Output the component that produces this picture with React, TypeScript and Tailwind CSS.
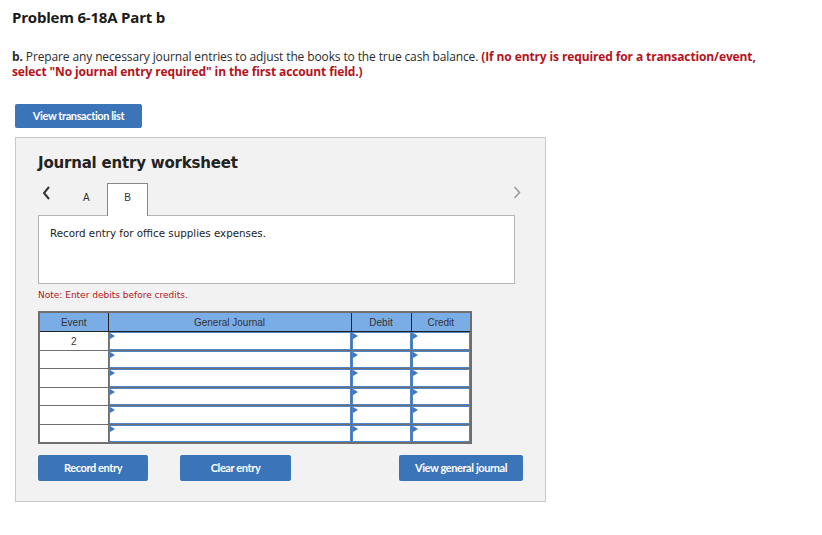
import React from "react";

const Arrow = () => (
  <svg width="5" height="6" viewBox="0 0 5 6" className="absolute left-0 top-0">
    <polygon points="0,0 5,3 0,6" fill="#3c78c6" />
  </svg>
);

function InputCell({ w }: { w: string }) {
  return (
    <td className={`border border-[#6f6f6f] p-0 ${w}`}>
      <div className="relative h-[17.5px] border border-[#4f84c6] bg-white">
        <Arrow />
      </div>
    </td>
  );
}

export default function App() {
  const rows = [0, 1, 2, 3, 4, 5];
  return (
    <div className="w-[822px] h-[535px] bg-white [font-family:'Open_Sans',sans-serif] text-[#222]">
      <div className="pl-[12px] pt-[6px]">
        <h1 className="text-[15px] font-bold text-[#1a1a1a] tracking-[-0.2px]">Problem 6-18A Part b</h1>
        <p className="mt-[20px] text-[12px] leading-[15px] tracking-[-0.12px] text-[#2a2a2a] w-[800px]">
          <b>b.</b> Prepare any necessary journal entries to adjust the books to the true cash balance.{" "}
          <span className="font-bold text-[#b5121b]">
            (If no entry is required for a transaction/event,
            <br />
            select "No journal entry required" in the first account field.)
          </span>
        </p>
      </div>
      <div className="pl-[15px] mt-[23px]">
        <button className="h-[24px] w-[127px] rounded-[2px] bg-[#3b74b8] text-white text-[11px] font-bold tracking-[-0.4px] [font-family:'Lato',sans-serif]">
          View transaction list
        </button>
        <div className="mt-[9px] w-[531px] h-[365px] border border-[#c8c8c8] bg-[#f2f2f2] [font-family:'DejaVu_Sans',Verdana,sans-serif]">
          <div className="pl-[22px] pt-[15px]">
            <h2 className="text-[15px] font-bold tracking-[-0.2px] text-[#222] leading-[20px]">
              Journal entry worksheet
            </h2>
            <div className="mt-[10px] h-[32px] w-[477px] relative">
              <span className="absolute left-[4px] top-[3px]">
                <svg width="9" height="14" viewBox="0 0 9 14"><polyline points="7,1 2,7 7,13" fill="none" stroke="#333" strokeWidth="2" /></svg>
              </span>
              <span className="absolute left-[45px] top-[7px] text-[10px] text-[#333] [font-family:'Liberation_Sans',sans-serif]">A</span>
              <div className="absolute left-[69px] top-0 w-[41px] h-[33px] border border-b-0 border-[#888] bg-white flex justify-center pt-[6px] text-[10px] text-[#333] [font-family:'Liberation_Sans',sans-serif] z-10">
                B
              </div>
              <span className="absolute left-[475px] top-[3px]">
                <svg width="8" height="13" viewBox="0 0 8 13"><polyline points="1.5,1 6.5,6.5 1.5,12" fill="none" stroke="#999" strokeWidth="1.5" /></svg>
              </span>
            </div>
            <div className="w-[477px] h-[69px] border border-[#b5b5b5] bg-white px-[11px] pt-[11px] text-[10.3px] leading-[12px] text-[#222]">
              Record entry for office supplies expenses.
            </div>
            <p className="mt-[6px] text-[9px] leading-[11px] text-[#b5121b]">Note: Enter debits before credits.</p>
            <table className="mt-[10px] border-collapse border-2 border-[#6f6f6f] [font-family:'Liberation_Sans',sans-serif] text-[10px]">
              <thead>
                <tr className="bg-[#7aade6] h-[20px] text-[#333]">
                  <th className="border border-[#222] font-normal w-[69px]">Event</th>
                  <th className="border border-[#222] font-normal w-[243px]">General Journal</th>
                  <th className="border border-[#222] font-normal w-[60px]">Debit</th>
                  <th className="border border-[#222] font-normal w-[60px]">Credit</th>
                </tr>
              </thead>
              <tbody>
                {rows.map((r) => (
                  <tr key={r}>
                    <td className="border border-[#6f6f6f] bg-white h-[18.5px] text-center align-middle text-[#333]">
                      {r === 0 ? "2" : ""}
                    </td>
                    <InputCell w="w-[243px]" />
                    <InputCell w="w-[60px]" />
                    <InputCell w="w-[60px]" />
                  </tr>
                ))}
              </tbody>
            </table>
            <div className="mt-[11px] flex w-[485px] [font-family:'Lato',sans-serif]">
              <button className="h-[26px] w-[110px] rounded-[2px] bg-[#3b74b8] text-white text-[11px] font-bold tracking-[-0.4px]">
                Record entry
              </button>
              <button className="ml-[32px] h-[26px] w-[111px] rounded-[2px] bg-[#3b74b8] text-white text-[11px] font-bold tracking-[-0.4px]">
                Clear entry
              </button>
              <button className="ml-auto h-[26px] w-[124px] rounded-[2px] bg-[#3b74b8] text-white text-[11px] font-bold tracking-[-0.4px]">
                View general journal
              </button>
            </div>
          </div>
        </div>
      </div>
    </div>
  );
}
